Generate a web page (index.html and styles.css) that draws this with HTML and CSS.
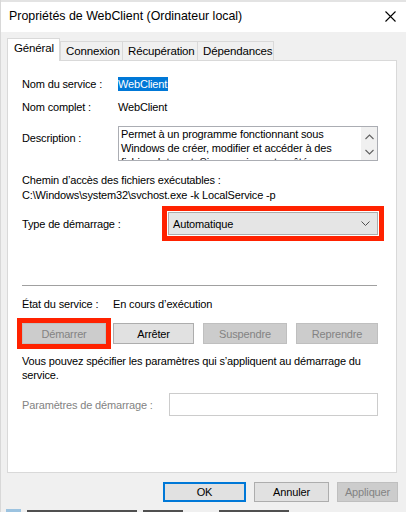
FILE: index.html
```html
<!DOCTYPE html>
<html lang="fr">
<head>
<meta charset="utf-8">
<title>Propriétés de WebClient</title>
<link rel="stylesheet" href="styles.css">
</head>
<body>
<div class="window">
  <div class="titlebar">
    <span class="title">Propriétés de WebClient (Ordinateur local)</span>
    <svg class="close" width="11" height="11" viewBox="0 0 11 11"><path d="M0.5 0.5 L10.5 10.5 M10.5 0.5 L0.5 10.5" stroke="#000" stroke-width="1.1" fill="none"/></svg>
  </div>
  <div class="tabs">
    <div class="tab active">Général</div>
    <div class="tab">Connexion</div>
    <div class="tab">Récupération</div>
    <div class="tab">Dépendances</div>
  </div>
  <div class="panel">
    <div class="row r1">
      <div class="label">Nom du service :</div>
      <div class="value"><span class="sel">WebClient</span></div>
    </div>
    <div class="row r2">
      <div class="label">Nom complet :</div>
      <div class="value">WebClient</div>
    </div>
    <div class="row r3">
      <div class="label desc-label">Description :</div>
      <div class="textarea">
        <div class="ta-text">Permet à un programme fonctionnant sous Windows de créer, modifier et accéder à des fichiers Internet. Si ce service est arrêté, ces</div>
        <div class="scroll">
          <svg width="9" height="6" viewBox="0 0 9 6"><path d="M0.5 5 L4.5 1 L8.5 5" stroke="#606060" stroke-width="1.1" fill="none"/></svg>
          <svg width="9" height="6" viewBox="0 0 9 6"><path d="M0.5 1 L4.5 5 L8.5 1" stroke="#606060" stroke-width="1.1" fill="none"/></svg>
        </div>
      </div>
    </div>
    <div class="path-block">
      <div>Chemin d’accès des fichiers exécutables :</div>
      <div>C:\Windows\system32\svchost.exe -k LocalService -p</div>
    </div>
    <div class="row r5">
      <div class="label">Type de démarrage :</div>
      <div class="select hl">
        <span>Automatique</span>
        <svg width="9" height="5" viewBox="0 0 9 5"><path d="M0.5 0.5 L4.5 4.5 L8.5 0.5" stroke="#505050" stroke-width="1" fill="none"/></svg>
      </div>
    </div>
    <div class="sep"></div>
    <div class="row state">
      <div class="label state-label">État du service :</div>
      <div>En cours d’exécution</div>
    </div>
    <div class="btn-row">
      <div class="btn disabled hl-btn">Démarrer</div>
      <div class="btn b2">Arrêter</div>
      <div class="btn disabled b3">Suspendre</div>
      <div class="btn disabled b4">Reprendre</div>
    </div>
    <div class="info">Vous pouvez spécifier les paramètres qui s’appliquent au démarrage du service.</div>
    <div class="row params">
      <div class="label gray">Paramètres de démarrage :</div>
      <div class="input"></div>
    </div>
  </div>
  <div class="footer">
    <div class="btn fbtn ok">OK</div>
    <div class="btn fbtn">Annuler</div>
    <div class="btn fbtn disabled">Appliquer</div>
  </div>
  <div class="under">
    <span class="u-icon"></span><span class="u-txt w1"></span><span class="u-txt w2"></span><span class="u-txt w3"></span>
  </div>
</div>
</body>
</html>
```

FILE: styles.css
```css
* { box-sizing: border-box; }
html, body { margin: 0; padding: 0; }
body {
  width: 406px;
  height: 512px;
  overflow: hidden;
  background: #f0f0f0;
  font-family: "Liberation Sans", Arial, sans-serif;
  font-size: 11px;
  letter-spacing: -0.15px;
  color: #000;
}
.window { width: 406px; height: 512px; position: relative; border-left: 1px solid #d8d8d8; }
.titlebar {
  height: 32px;
  background: #fff;
  border-top: 2px solid #e3e3e3;
  display: flex;
  align-items: center;
  justify-content: space-between;
  padding: 0 10px 0 8px;
}
.title { font-size: 12.4px; letter-spacing: 0; padding-bottom: 2px; }
.close { margin-bottom: 2px; }
.tabs {
  display: flex;
  align-items: flex-end;
  height: 28px;
  padding-left: 6px;
  position: relative;
  z-index: 2;
}
.tab {
  height: 19px;
  padding: 0 5px;
  line-height: 18px;
  background: #f0f0f0;
  border: 1px solid #d9d9d9;
  border-bottom: none;
  margin-left: -1px;
  font-size: 11.5px;
}
.tab.active {
  height: 23px;
  background: #fff;
  margin-left: 0;
  margin-bottom: -1px;
  line-height: 19px;
  padding: 0 6px;
}
.tab:nth-child(1) { width: 53px; }
.tab:nth-child(2) { margin-left: 0; width: 63px; }
.tab:nth-child(3) { width: 76px; }
.tab:nth-child(4) { width: 77px; }
.panel {
  margin-left: 6px;
  width: 390px;
  height: 413px;
  background: #fff;
  border: 1px solid #d9d9d9;
  padding: 15px 18px 0 14px;
  position: relative;
  z-index: 1;
}
.row { display: flex; align-items: center; line-height: 16px; }
.label { width: 96px; flex: none; }
.r2 { margin-top: 7px; }
.sel { background: #0078d7; color: #fff; padding: 0 1px 0 0; display: inline-block; line-height: 14px; }
.r3 { margin-top: 11px; align-items: flex-start; }
.desc-label { padding-top: 4px; }
.textarea {
  width: 261px;
  height: 35px;
  border: 1px solid #abadb3;
  display: flex;
  overflow: hidden;
}
.ta-text { flex: 1; padding: 0 0 0 2px; line-height: 14px; }
.scroll {
  width: 16px;
  flex: none;
  background: #f0f0f0;
  display: flex;
  flex-direction: column;
  align-items: center;
  justify-content: space-between;
  padding: 7px 0 5px;
}
.path-block { margin-top: 12px; line-height: 15px; }
.r5 { margin-top: 9px; }
.r5 .label { width: 146px; }
.select {
  width: 212px;
  height: 23px;
  background: #e5e5e5;
  border: 1px solid #acacac;
  display: flex;
  align-items: center;
  justify-content: space-between;
  padding: 0 7px 0 4px;
}
.hl { outline: 5px solid #ff2200; outline-offset: 1px; }
.sep { margin-top: 50px; height: 1px; background: #a0a0a0; width: 355px; }
.state { margin-top: 10px; }
.state-label { width: 91px; }
.btn-row { display: flex; margin-top: 11px; }
.btn {
  height: 21px;
  border: 1px solid #adadad;
  background: #e1e1e1;
  display: flex;
  align-items: center;
  justify-content: center;
  flex: none;
}
.btn-row .btn { width: 84px; }
.btn.disabled { background: #cccccc; border-color: #bfbfbf; color: #838383; }
.hl-btn { outline: 5px solid #ff2200; outline-offset: 0; }
.btn-row .b2 { margin-left: 7px; width: 81px; }
.btn-row .b3 { margin-left: 9px; width: 84px; }
.btn-row .b4 { margin-left: 9px; width: 82px; }
.info { margin-top: 10px; line-height: 14px; width: 350px; }
.params { margin-top: 11px; }
.params .label { width: 147px; }
.gray { color: #838383; }
.input { width: 210px; height: 23px; border: 1px solid #cccccc; }
.footer { display: flex; margin-top: 9px; padding-left: 162px; }
.fbtn { height: 20px; width: 83px; }
.fbtn + .fbtn { margin-left: 8px; }
.fbtn:nth-child(2) { width: 75px; }
.fbtn:nth-child(3) { width: 61px; }
.ok { border: 2px solid #0078d7; }
.under { display: flex; align-items: center; gap: 6px; margin-top: 4px; padding-left: 5px; height: 6px; }
.u-icon { width: 15px; height: 5px; background: #9cc3e0; margin-top: 4px; }
.u-txt { height: 4px; background: #505050; margin-top: 5px; }
.w1 { width: 110px; }
.w2 { width: 40px; }
.w3 { width: 70px; margin-left: 30px; }
```
